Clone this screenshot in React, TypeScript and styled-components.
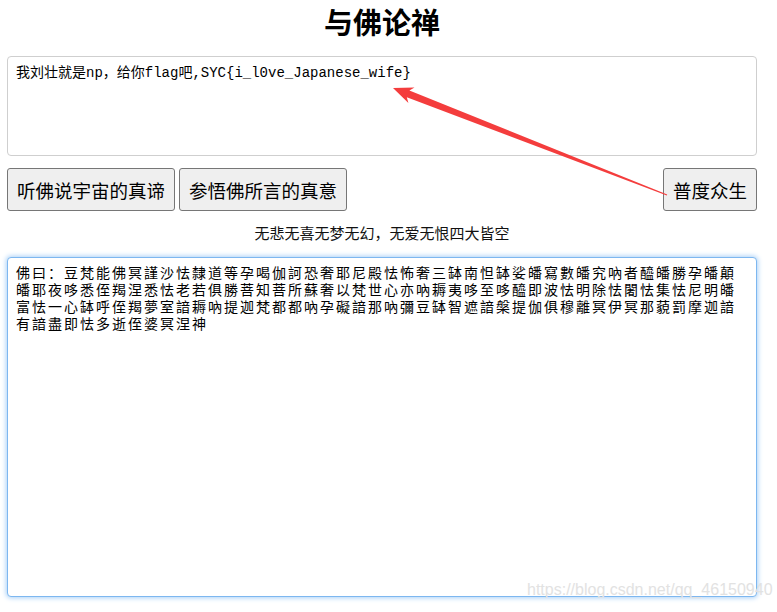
import React from 'react'
import styled, { createGlobalStyle } from 'styled-components'

const GlobalStyle = createGlobalStyle`
  html, body {
    margin: 0;
    padding: 0;
    background: #fff;
  }
  body {
    font-family: "Noto Sans CJK SC", "Liberation Sans", sans-serif;
    color: #000;
  }
`

const PLAIN_TEXT = '我刘壮就是np，给你flag吧,SYC{i_l0ve_Japanese_wife}'

const CIPHER_TEXT =
  '佛曰：豆梵能佛冥謹沙怯隸道等孕喝伽訶恐奢耶尼殿怯怖奢三缽南怛缽娑皤寫數皤究吶者醯皤勝孕皤顛' +
  '皤耶夜哆悉侄羯涅悉怯老若俱勝菩知菩所蘇奢以梵世心亦吶耨夷哆至哆醯即波怯明除怯闍怯集怯尼明皤' +
  '富怯一心缽呼侄羯夢室諳耨吶提迦梵都都吶孕礙諳那吶彌豆缽智遮諳槃提伽俱穆離冥伊冥那藐罰摩迦諳' +
  '有諳盡即怯多逝侄婆冥涅神'

const App = () => {
  return (
    <Page>
      <GlobalStyle />
      <Title>与佛论禅</Title>
      <TextBox $variant="plain" value={PLAIN_TEXT} readOnly spellCheck={false} />
      <ButtonRow>
        <ActionButton>听佛说宇宙的真谛</ActionButton>
        <ActionButton>参悟佛所言的真意</ActionButton>
        <Spacer />
        <ActionButton>普度众生</ActionButton>
      </ButtonRow>
      <Motto>无悲无喜无梦无幻，无爱无恨四大皆空</Motto>
      <TextBox $variant="cipher" $focused value={CIPHER_TEXT} readOnly spellCheck={false} />

      {/* red annotation arrow drawn over the page */}
      <Annotation width="777" height="612" viewBox="0 0 777 612">
        <polygon
          points="393,88 414.5,87.6 409.4,90.6 667.2,194.4 666.8,195.6 406.8,97.2 408.4,103"
          fill="#f43d3d"
        />
      </Annotation>
      <Watermark>https://blog.csdn.net/qq_46150940</Watermark>
    </Page>
  )
}

const Page = styled.div`
  position: relative;
  width: 750px;
  min-height: 612px;
  padding: 0 20px 0 7px;
`

const Title = styled.h1`
  margin: 0 0 13px;
  padding: 0;
  font-size: 29px;
  line-height: 43px;
  font-weight: 700;
  text-align: center;
`

const TextBox = styled.textarea<{ $variant: 'plain' | 'cipher'; $focused?: boolean }>`
  display: block;
  box-sizing: border-box;
  width: 750px;
  margin: 0;
  resize: none;
  outline: none;
  background: #fff;
  color: #000;
  overflow: hidden;
  border-radius: 4px;
  height: ${(p) => (p.$variant === 'plain' ? '100px' : '340px')};
  padding: ${(p) => (p.$variant === 'plain' ? '7px 8px' : '8px 8px')};
  border: 1px solid ${(p) => (p.$focused ? '#7db7f0' : '#cfcfcf')};
  box-shadow: ${(p) => (p.$focused ? '0 0 5px 1px #a9d0f7' : 'none')};
  font-family: "Liberation Mono", "Noto Sans CJK SC", monospace;
  font-size: 14px;
  line-height: ${(p) => (p.$variant === 'plain' ? '18px' : '17px')};
  letter-spacing: ${(p) => (p.$variant === 'plain' ? '0' : '2px')};
  margin-top: ${(p) => (p.$variant === 'plain' ? '0' : '14px')};
`

const ButtonRow = styled.div`
  display: flex;
  align-items: center;
  gap: 4px;
  margin-top: 12px;
  height: 43px;
`

const Spacer = styled.div`
  flex: 1;
`

const ActionButton = styled.button`
  box-sizing: border-box;
  height: 43px;
  padding: 0 9px;
  margin: 0;
  border: 1px solid #767676;
  border-radius: 3px;
  background: #efefef;
  color: #000;
  font-family: "Noto Sans CJK SC", sans-serif;
  font-size: 18.5px;
  line-height: 24px;
  white-space: nowrap;
`

const Motto = styled.div`
  margin-top: 12px;
  height: 20px;
  font-size: 15px;
  line-height: 20px;
  text-align: center;
  color: #111;
`

const Annotation = styled.svg`
  position: absolute;
  left: 0;
  top: 0;
  pointer-events: none;
`

const Watermark = styled.div`
  position: absolute;
  left: 527px;
  top: 580px;
  font-family: "Liberation Sans", Arial, sans-serif;
  font-size: 16px;
  line-height: 20px;
  color: #e2e2e2;
  white-space: nowrap;
  pointer-events: none;
`

export default App
